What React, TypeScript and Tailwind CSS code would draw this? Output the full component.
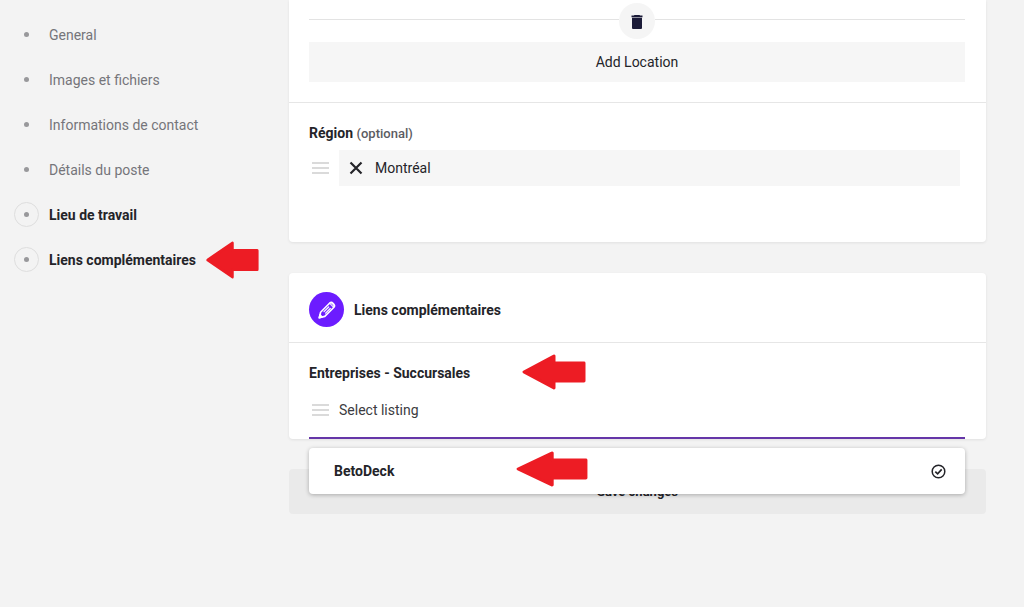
// src/App.tsx
// Listing editor: section navigation on the left, form cards on the right

import type { ReactNode } from 'react';

const sections = [
  { id: 'general', label: 'General', active: false },
  { id: 'images', label: 'Images et fichiers', active: false },
  { id: 'contact', label: 'Informations de contact', active: false },
  { id: 'details', label: 'Détails du poste', active: false },
  { id: 'lieu', label: 'Lieu de travail', active: true },
  { id: 'liens', label: 'Liens complémentaires', active: true, arrow: true },
];

function RedArrow({ className = '' }: { className?: string }) {
  return (
    <svg className={`absolute text-[#ed1c24] ${className}`} viewBox="0 0 64 38" preserveAspectRatio="none" fill="currentColor" stroke="currentColor" strokeWidth="3" strokeLinejoin="round" aria-hidden="true">
      <path d="M2 19 32 2v7.500h30v19H32V36z" />
    </svg>
  );
}

function DragHandle() {
  return (
    <span className="flex w-[17px] shrink-0 flex-col gap-[3px]" aria-hidden="true">
      <span className="h-[2px] bg-[#dadada]" />
      <span className="h-[2px] bg-[#dadada]" />
      <span className="h-[2px] bg-[#dadada]" />
    </span>
  );
}

function TrashIcon() {
  return (
    <svg className="h-[15px] w-3" viewBox="0 0 12 15" fill="#1b1b38" aria-hidden="true">
      <path d="M3.500 1h5l.6.6h2.400v1.600H.5V1.600h2.400z" />
      <path d="M1 3.800h10V14a1 1 0 0 1-1 1H2a1 1 0 0 1-1-1z" />
    </svg>
  );
}

function PencilIcon() {
  return (
    <svg className="size-5" viewBox="0 0 20 20" fill="none" stroke="#fff" strokeWidth="1.600" strokeLinejoin="round" strokeLinecap="round" aria-hidden="true">
      <path d="M2.300 17.700 3.600 12.200 12.500 3.300a2.500 2.500 0 0 1 3.500 0l.7.700a2.500 2.500 0 0 1 0 3.500L7.800 16.400z" />
      <path d="M7 11.700l4.700-4.700M8.600 13.200l4.700-4.700" strokeWidth="1.200" />
      <path d="M12.400 3.600 16.400 7.600 17.200 5.200 14.700 2.700z" fill="#fff" fillOpacity="0.600" strokeWidth="0.800" />
      <path d="M2.300 17.700 3 14.900 5.100 17z" fill="#fff" />
    </svg>
  );
}

function CheckCircle() {
  return (
    <svg className="size-[15px]" viewBox="0 0 15 15" fill="none" stroke="#242429" strokeWidth="1.500" aria-hidden="true">
      <circle cx="7.500" cy="7.500" r="6.300" />
      <path d="M4.300 7.600 6.600 9.800 10.700 5.400" strokeWidth="1.700" />
    </svg>
  );
}

function Card({ children, className = '' }: { children: ReactNode; className?: string }) {
  return <section className={`bg-white shadow-[0_1px_3px_rgba(0,0,0,0.08)] ${className}`}>{children}</section>;
}

export default function App() {
  return (
    <div className="flex min-h-screen bg-[#f3f3f3] font-[Roboto,sans-serif] text-sm leading-5 text-[#242429]">
      <nav className="w-[289px] shrink-0 pt-[22px] pl-3.5">
        <ul className="flex flex-col gap-5">
          {sections.map((s) => (
            <li key={s.id} className="flex">
              <a href={`#${s.id}`} className={`relative flex items-center gap-2.5 ${s.active ? 'font-bold' : 'text-[#75757a]'}`}>
                <span className={`flex size-[25px] items-center justify-center rounded-full border ${s.active ? 'border-[#dedede]' : 'border-transparent'}`}>
                  <span className="size-[5px] rounded-full bg-[#98989b]" />
                </span>
                {s.label}
                {s.arrow && <RedArrow className="-top-1.5 left-full ml-2.5 h-[38px] w-[53px]" />}
              </a>
            </li>
          ))}
        </ul>
      </nav>

      <main className="min-w-0 flex-1 pr-[38px] pb-10">
        <form onSubmit={(e) => e.preventDefault()}>
          <Card className="rounded-b">
            <div className="border-b border-[#e6e6e6] pt-[3px] pr-[21px] pb-5 pl-5">
              <div className="flex items-start">
                <span className="mt-4 h-px flex-1 bg-[#e3e3e3]" />
                <button type="button" aria-label="Delete" className="flex size-9 items-center justify-center rounded-full bg-[#f5f5f5]">
                  <TrashIcon />
                </button>
                <span className="mt-4 h-px flex-1 bg-[#e3e3e3]" />
              </div>
              <button type="button" className="mt-[3px] h-10 w-full bg-[#f6f6f6]">
                Add Location
              </button>
            </div>
            <div className="px-5 pt-5 pb-14">
              <h2 className="font-bold">
                Région <span className="text-[13px] font-medium text-[#5c5c62]">(optional)</span>
              </h2>
              <div className="mt-1.5 flex items-center gap-2.5 pr-1.5 pl-[3px]">
                <DragHandle />
                <div className="flex h-9 flex-1 items-center gap-3 bg-[#f6f6f6] px-2.5">
                  <button type="button" aria-label="Remove Montréal">
                    <svg className="size-3.5" viewBox="0 0 14 14" stroke="#242429" strokeWidth="2.200" aria-hidden="true">
                      <path d="M1.500 1.500 12.500 12.500M12.500 1.500 1.500 12.500" />
                    </svg>
                  </button>
                  <span>Montréal</span>
                </div>
              </div>
            </div>
          </Card>

          <Card className="mt-[31px] rounded">
            <div className="flex items-center gap-2.5 border-b border-[#e6e6e6] px-5 pt-[19px] pb-[15px]">
              <span className="flex size-[35px] items-center justify-center rounded-full bg-[#6c1cff]">
                <PencilIcon />
              </span>
              <h2 className="font-bold">Liens complémentaires</h2>
            </div>
            <div className="relative pt-5 pr-[21px] pl-5">
              <label htmlFor="listing" className="block font-bold">
                Entreprises - Succursales
              </label>
              <RedArrow className="top-[11px] left-[233px] h-[36px] w-[64px]" />
              <div className="flex h-14 items-center gap-2.5 border-b-2 border-[#6536a8] pl-[3px]">
                <DragHandle />
                <input id="listing" type="text" placeholder="Select listing" className="min-w-0 flex-1 bg-transparent outline-none placeholder:text-[#3c3c41]" />
              </div>
              <ul role="listbox" aria-label="Entreprises" className="absolute top-full right-[21px] left-5 z-10 mt-[9px] rounded bg-white shadow-[0_1px_4px_rgba(0,0,0,0.28)]">
                <li role="option" aria-selected="true" className="relative flex h-[46px] items-center justify-between pr-[19px] pl-[25px] font-bold">
                  BetoDeck
                  <CheckCircle />
                  <RedArrow className="top-[3px] left-[207px] h-[36px] w-[72px]" />
                </li>
              </ul>
            </div>
          </Card>

          <button type="submit" className="mt-[30px] h-[45px] w-full rounded bg-[#eaeaea] text-[13px] font-bold">
            Save changes
          </button>
        </form>
      </main>
    </div>
  );
}
